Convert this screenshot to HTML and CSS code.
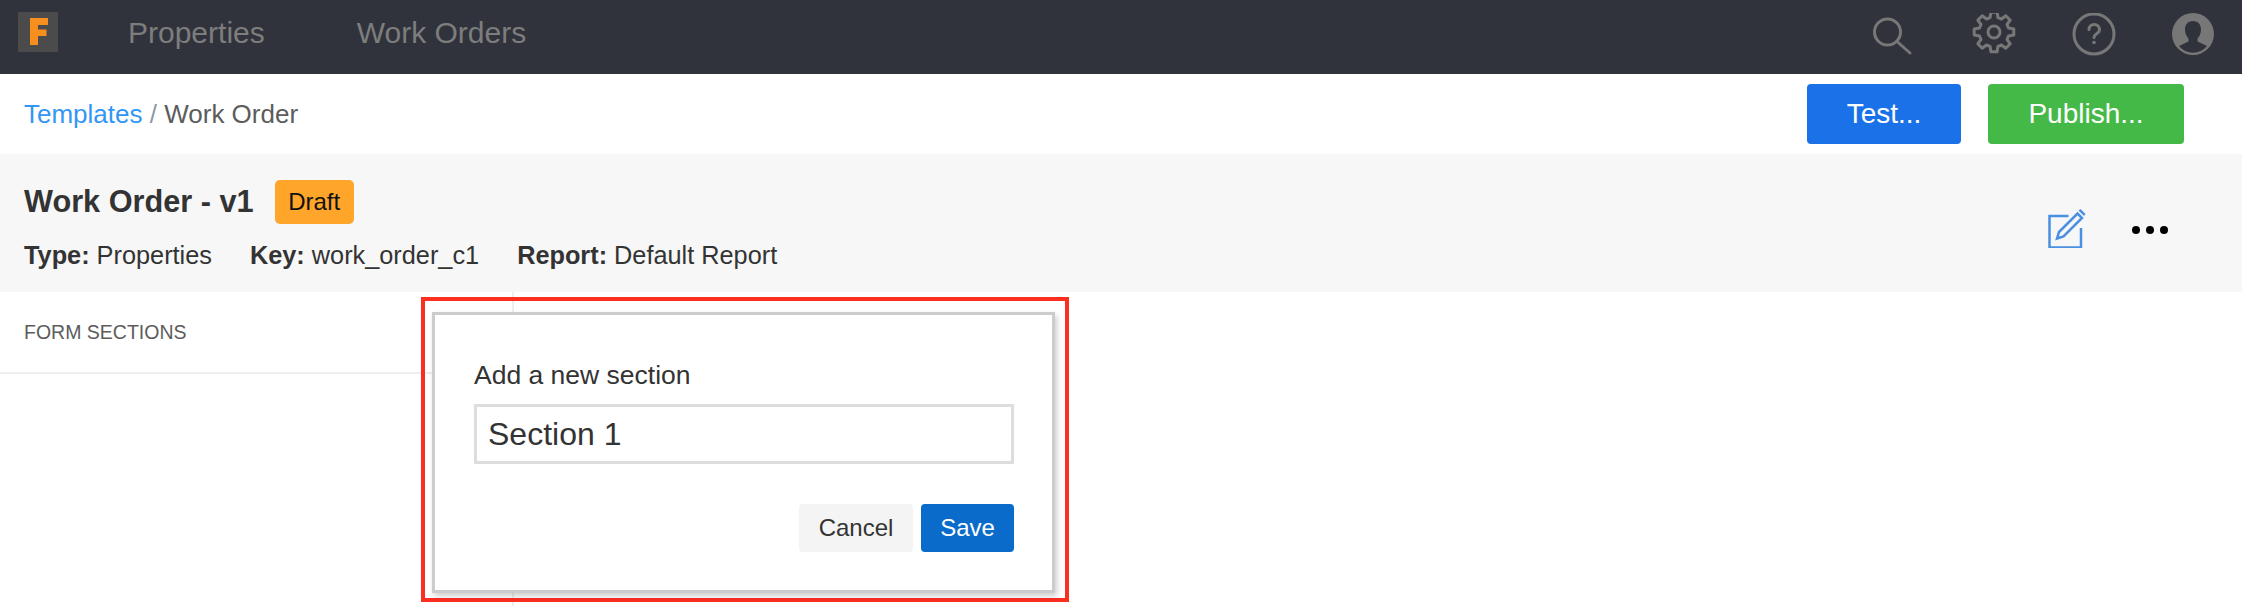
FILE: index.html
```html
<!DOCTYPE html>
<html lang="en">
<head>
  <meta charset="UTF-8" />
  <title>Work Order - v1</title>
  <link rel="stylesheet" href="styles.css">
</head>
<body>

  <header class="topbar">
    <div class="logo"><svg width="40" height="40" viewBox="0 0 40 40"><path class="logo-f" d="M12 6h18v7h-10v4.500h8.500v6.500h-8.500v9h-8z"/></svg></div>
    <nav class="mainnav">
      <a href="#">Properties</a>
      <a href="#">Work Orders</a>
    </nav>
    <div class="topicons">
      <svg class="ico" width="48" height="48" viewBox="0 0 48 48"><circle cx="18.500" cy="19" r="13"/><path d="M28 28.500l13 11.500"/></svg>
      <svg class="ico" width="48" height="48" viewBox="0 0 48 48"><g transform="translate(25 19)"><path d="M-3.100 -19.800L3.100 -19.800L3.900 -14.500L7.500 -13L11.800 -16.200L16.200 -11.800L13 -7.500L14.500 -3.900L19.800 -3.100L19.800 3.100L14.500 3.900L13 7.500L16.200 11.800L11.800 16.200L7.500 13L3.900 14.500L3.100 19.800L-3.100 19.800L-3.900 14.500L-7.500 13L-11.800 16.200L-16.200 11.800L-13 7.500L-14.500 3.900L-19.800 3.100L-19.800 -3.100L-14.500 -3.900L-13 -7.500L-16.200 -11.800L-11.800 -16.200L-7.500 -13L-3.900 -14.500Z"/><circle r="6"/></g></svg>
      <svg class="ico" width="48" height="48" viewBox="0 0 48 48"><circle cx="25" cy="21" r="20"/><path d="M20 16.500c0-7 10.500-6.500 10.500 0 0 4.500-5.500 4-5.500 8"/><circle class="dot" cx="25" cy="29.500" r="1.800"/></svg>
      <svg width="48" height="48" viewBox="0 0 48 48"><circle class="avatar-bg" cx="24" cy="21" r="21"/><path class="avatar-fg" d="M24 8c-5 0-8 3.500-8 8.500 0 4 1.500 7 3.500 9v3L10 33a18 18 0 0 0 28 0l-9.500-4.500v-3c2-2 3.500-5 3.500-9 0-5-3-8.500-8-8.500z"/></svg>
    </div>
  </header>

  <div class="crumbs">
    <div class="crumb-text"><a href="#">Templates</a> <span class="sep">/</span> Work Order</div>
    <div class="crumb-actions">
      <button class="btn btn-test">Test...</button>
      <button class="btn btn-publish">Publish...</button>
    </div>
  </div>

  <section class="summary">
    <div>
      <div class="title-row">
        <h1>Work Order - v1</h1>
        <span class="badge">Draft</span>
      </div>
      <div class="meta">
        <span><strong>Type:</strong> Properties</span>
        <span><strong>Key:</strong> work_order_c1</span>
        <span><strong>Report:</strong> Default Report</span>
      </div>
    </div>
    <div class="summary-actions">
      <svg class="edit" width="40" height="40" viewBox="0 0 40 40"><path d="M20.500 8H1.500v31.500h31.500V20"/><path d="M9 30.500l2-6.500L29.500 5.500l4.500 4.500L15.500 28.500z"/><path class="edit-tip" d="M30.500 2.500l2-1.500 5 5-1.500 2z"/></svg>
      <div class="dots"><i></i><i></i><i></i></div>
    </div>
  </section>

  <main class="content">
    <aside class="sidebar">
      <div class="sidebar-head">FORM SECTIONS</div>
    </aside>
  </main>

  <!-- red marker round the popup -->
  <div class="marker">
    <form class="dialog">
      <label for="sectionName">Add a new section</label>
      <input type="text" id="sectionName" value="Section 1" />
      <div class="dialog-actions">
        <button type="button" class="btn-cancel">Cancel</button>
        <button type="button" class="btn-save">Save</button>
      </div>
    </form>
  </div>

</body>
</html>
```

FILE: styles.css
```css
html, body {
  margin: 0;
  height: 606px;
  overflow: hidden;
}

body {
  font-family: "Liberation Sans", Arial, sans-serif;
  background-color: #fff;
  color: #333;
  position: relative;
}

a {
  text-decoration: none;
}

.topbar {
  height: 74px;
  background-color: #30333b;
  display: flex;
  align-items: center;
  padding: 0 25px 0 18px;
}

.logo {
  width: 40px;
  height: 40px;
  margin-top: -10px;
  background-color: #4b4b4b;
}

.logo-f {
  fill: #f78f1e;
  filter: blur(0.6px);
}

.mainnav {
  display: flex;
  gap: 92px;
  margin-left: 70px;
  flex: 1;
}

.mainnav a {
  color: #7d7d7d;
  font-size: 30px;
  margin-top: -8px;
}

.topicons {
  display: flex;
  gap: 52px;
}

.ico {
  fill: none;
  stroke: #777;
  stroke-width: 3;
  stroke-linecap: round;
  stroke-linejoin: round;
}

.ico .dot {
  fill: #777;
  stroke: none;
}

.avatar-bg {
  fill: #777;
}

.avatar-fg {
  fill: #30333b;
}

.crumbs {
  height: 80px;
  display: flex;
  align-items: center;
  justify-content: space-between;
  padding: 0 58px 0 24px;
}

.crumb-text {
  font-size: 26px;
  color: #5c5c5c;
}

.crumb-text a {
  color: #3396f5;
}

.sep {
  color: #8b98a8;
}

.crumb-actions {
  display: flex;
  gap: 27px;
}

.btn {
  height: 60px;
  border: none;
  border-radius: 4px;
  color: #fff;
  font-family: inherit;
  font-size: 28px;
}

.btn-test {
  width: 154px;
  background-color: #1b72e8;
}

.btn-publish {
  width: 196px;
  background-color: #45b948;
}

.summary {
  height: 138px;
  background-color: #f7f7f7;
  display: flex;
  justify-content: space-between;
  padding: 0 74px 0 24px;
}

.title-row {
  display: flex;
  align-items: center;
  gap: 21px;
  margin-top: 26px;
}

h1 {
  margin: 0;
  font-size: 30.700px;
  color: #333;
}

.badge {
  background-color: #fea52a;
  color: #111;
  border-radius: 5px;
  width: 79px;
  height: 44px;
  line-height: 44px;
  text-align: center;
  font-size: 24px;
}

.meta {
  display: flex;
  gap: 38px;
  margin-top: 17px;
  font-size: 25.300px;
}

.summary-actions {
  display: flex;
  align-items: center;
  gap: 44px;
}

.edit {
  fill: none;
  stroke: #4a90e2;
  stroke-width: 2.500;
  margin-top: 10px;
}

.edit-tip {
  fill: #4a90e2;
  stroke: none;
}

.dots {
  display: flex;
  gap: 6px;
  margin-top: 14px;
}

.dots i {
  width: 8px;
  height: 8px;
  border-radius: 50%;
  background-color: #000;
}

.content {
  display: flex;
  height: 314px;
}

.sidebar {
  width: 512px;
  border-right: 2px solid #eee;
}

.sidebar-head {
  height: 80px;
  line-height: 80px;
  padding-left: 24px;
  font-size: 19.500px;
  color: #5c5c5c;
  border-bottom: 2px solid #eee;
}

/* overlay */
.marker {
  position: absolute;
  left: 421px;
  top: 297px;
  width: 640px;
  height: 297px;
  border: 4px solid #fb2e20;
}

.dialog {
  position: absolute;
  left: 7px;
  top: 11px;
  width: 623px;
  height: 281px;
  background-color: #fff;
  border: 3px solid #ccc;
  box-shadow: 2px 3px 6px rgba(0, 0, 0, 0.2);
  padding: 0 38px 0 39px;
  box-sizing: border-box;
  display: flex;
  flex-direction: column;
}

.dialog label {
  font-size: 26.500px;
  margin-top: 46px;
  line-height: 28px;
  color: #333;
}

.dialog input {
  height: 60px;
  margin-top: 15px;
  border: 3px solid #ddd;
  padding: 0 11px;
  box-sizing: border-box;
  font-family: inherit;
  font-size: 32px;
  color: #333;
  outline: none;
}

.dialog-actions {
  display: flex;
  justify-content: flex-end;
  gap: 8px;
  margin-top: 40px;
}

.dialog-actions button {
  height: 48px;
  border: none;
  border-radius: 4px;
  font-family: inherit;
  font-size: 24px;
}

.btn-cancel {
  width: 114px;
  background-color: #f4f4f4;
  color: #333;
}

.btn-save {
  width: 93px;
  background-color: #0b6bcb;
  color: #fff;
}
```
